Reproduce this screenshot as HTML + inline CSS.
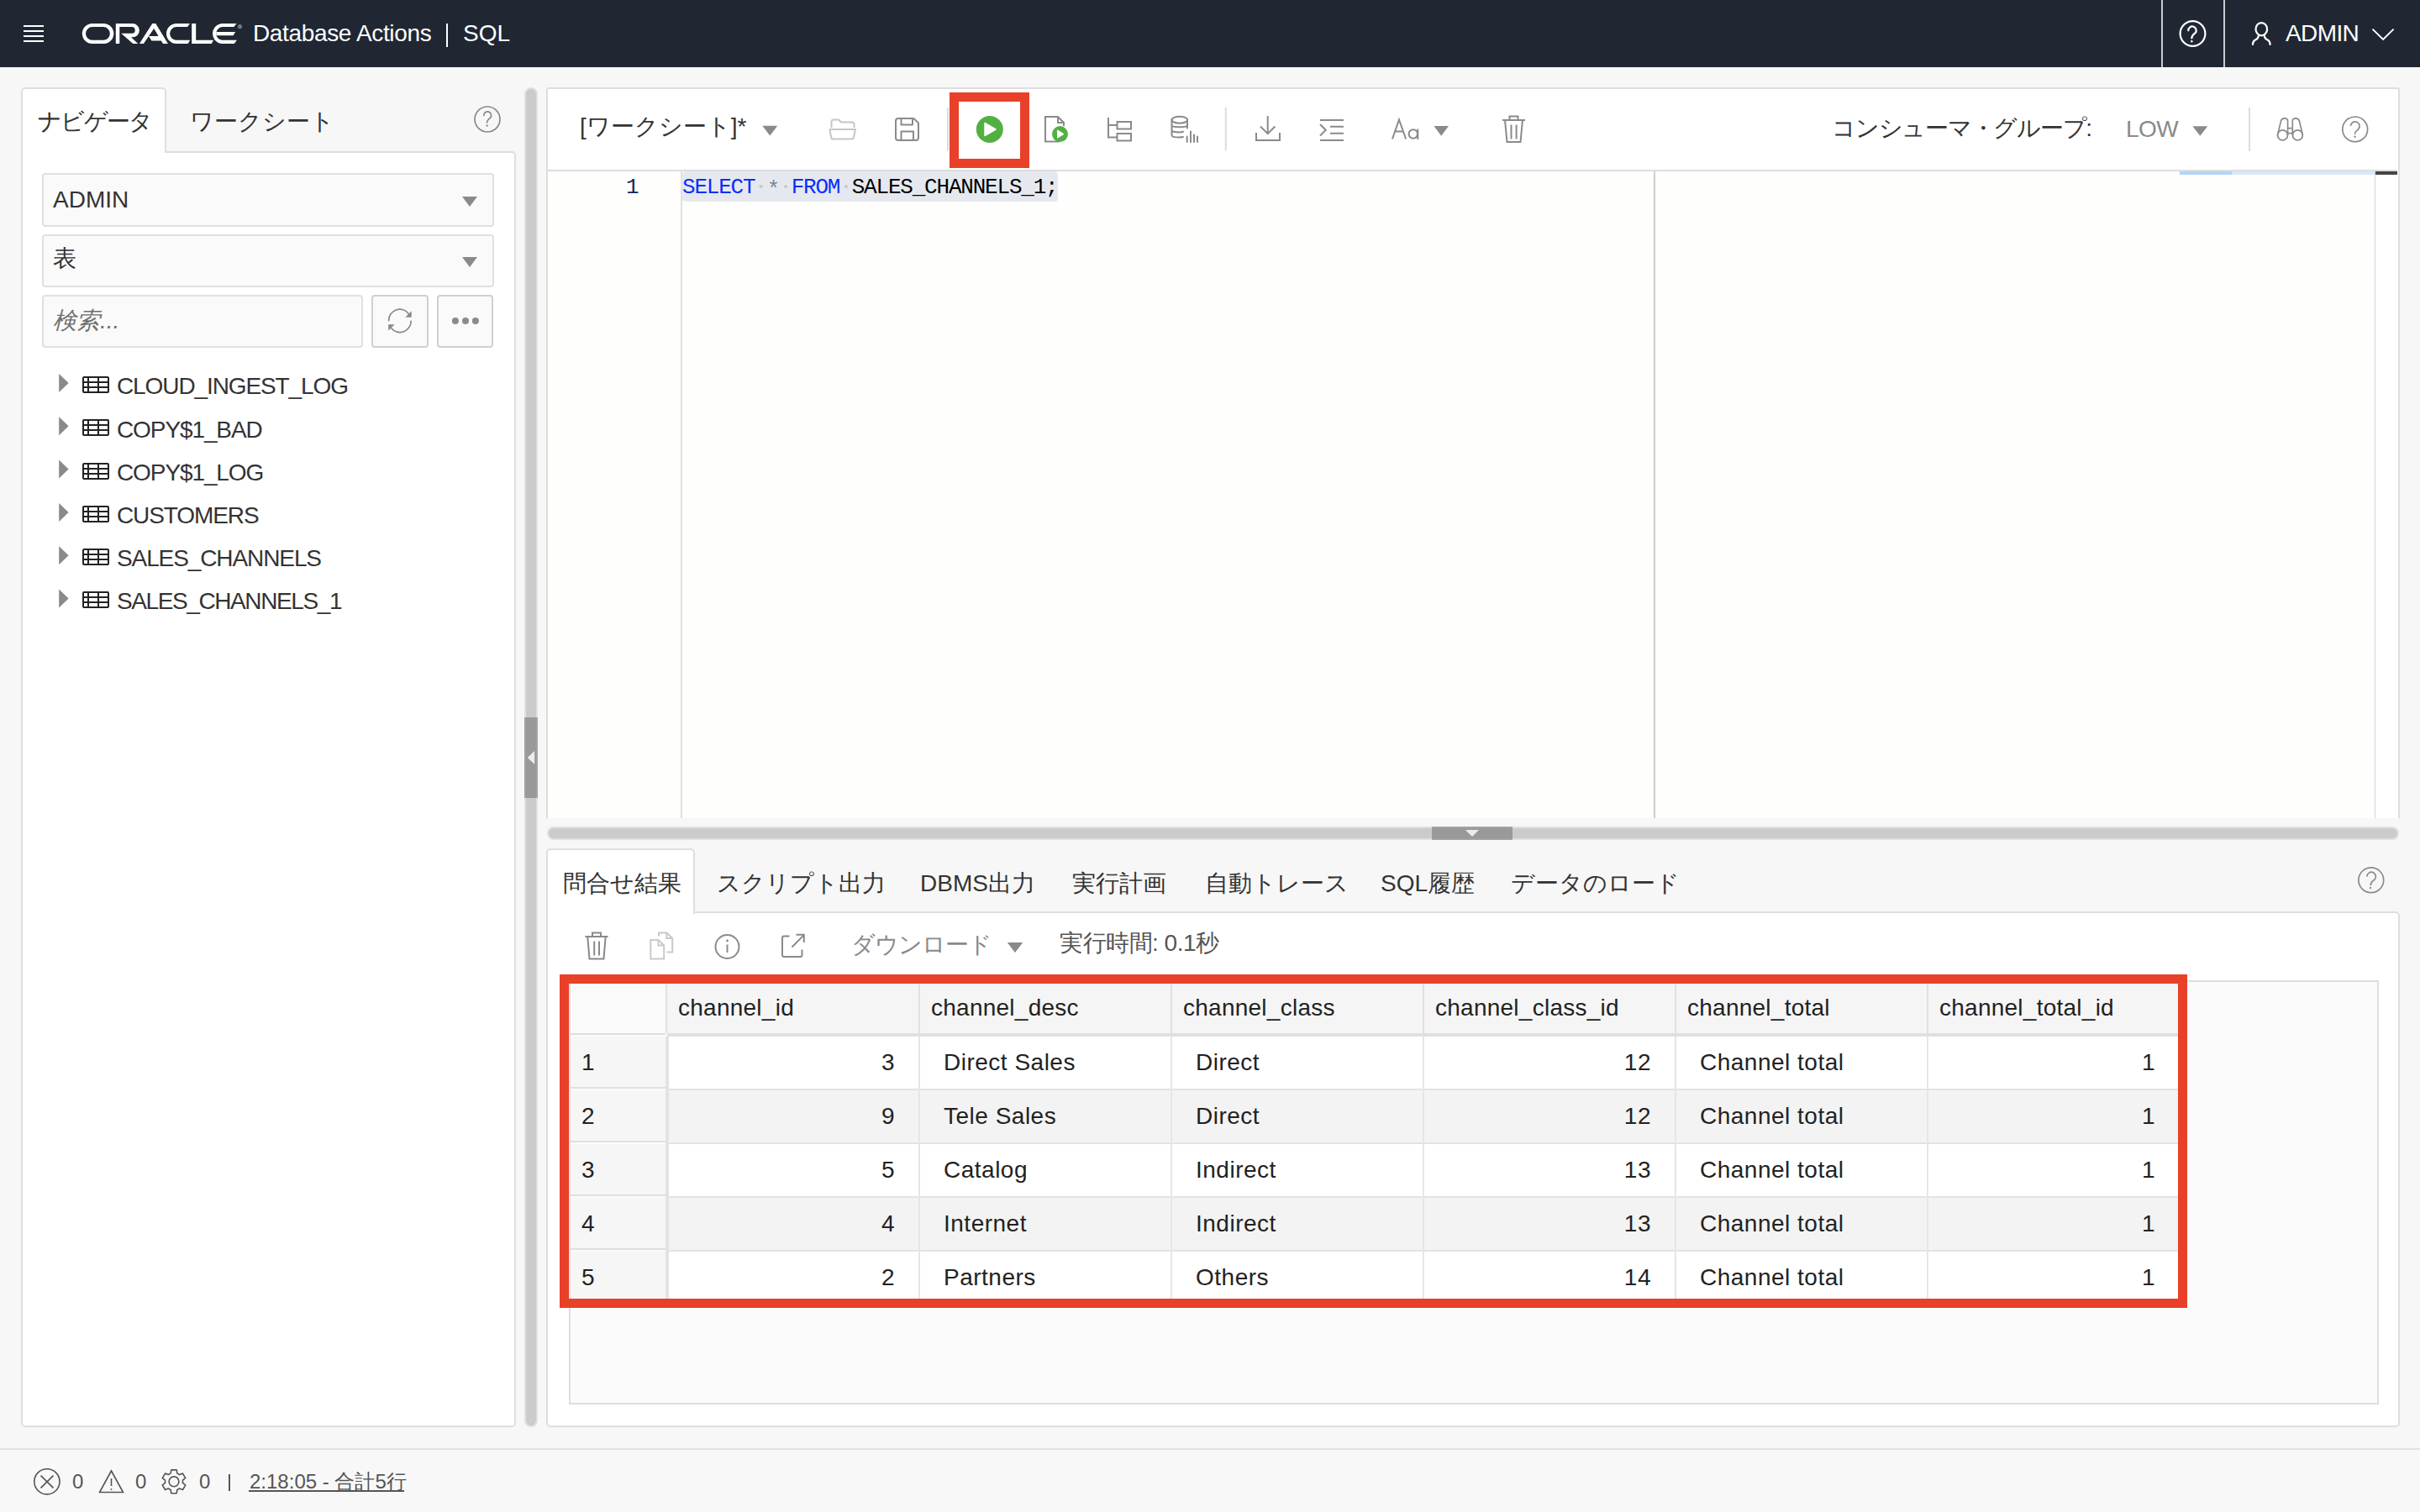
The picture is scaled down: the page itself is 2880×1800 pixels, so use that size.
<!DOCTYPE html>
<html><head><meta charset="utf-8">
<style>
*{box-sizing:border-box;margin:0;padding:0}
html,body{width:2880px;height:1800px;overflow:hidden;background:#f7f7f7;font-family:"Liberation Sans",sans-serif;color:#333}
.a{position:absolute}
.t{position:absolute;white-space:nowrap;font-size:28px;line-height:40px}
svg{position:absolute;overflow:visible}
#hdr{left:0;top:0;width:2880px;height:80px;background:#202733}
.hsep{top:0;width:2px;height:80px;background:#c9cbcf}
.panel{background:#fff;border:2px solid #dedede;border-radius:5px}
.tri{position:absolute;width:0;height:0;border-left:9px solid transparent;border-right:9px solid transparent;border-top:12px solid #8a8a8a}
.sel{background:#fafafa;border:2px solid #e0e0e0;border-radius:4px}
.tree .t{color:#333;letter-spacing:-1.1px}
.cell{color:#222}
.gi{stroke:#8a8a8a;fill:none;stroke-width:2.4}
</style></head><body>

<!-- HEADER -->
<div id="hdr" class="a"></div>
<div class="a" style="left:28px;top:30px;width:24px;height:2px;background:#fff"></div>
<div class="a" style="left:28px;top:36px;width:24px;height:2px;background:#fff"></div>
<div class="a" style="left:28px;top:42px;width:24px;height:2px;background:#fff"></div>
<div class="a" style="left:28px;top:48px;width:24px;height:2px;background:#fff"></div>

<div class="t" style="left:301px;top:20px;color:#fff;letter-spacing:-0.35px">Database Actions</div>
<div class="a" style="left:531px;top:28px;width:2px;height:28px;background:#fff"></div>
<div class="t" style="left:551px;top:20px;color:#fff">SQL</div>

<div class="a hsep" style="left:2572px"></div>
<div class="a hsep" style="left:2646px"></div>
<div class="t" style="left:2720px;top:20px;color:#fff;letter-spacing:-0.6px">ADMIN</div>

<!-- LEFT PANEL -->
<div class="a panel" style="left:25px;top:180px;width:589px;height:1519px;border-top-left-radius:0"></div>
<div class="a" style="left:25px;top:104px;width:173px;height:78px;background:#fff;border:2px solid #dedede;border-bottom:none;border-radius:5px 5px 0 0"></div>
<div class="t" style="left:45px;top:125px;letter-spacing:-1.7px">ナビゲータ</div>
<div class="t" style="left:226px;top:125px">ワークシート</div>

<div class="a sel" style="left:50px;top:206px;width:538px;height:64px"></div>
<div class="t" style="left:63px;top:218px">ADMIN</div>
<div class="tri" style="left:550px;top:234px"></div>
<div class="a sel" style="left:50px;top:279px;width:538px;height:63px"></div>
<div class="t" style="left:63px;top:288px">表</div>
<div class="tri" style="left:550px;top:306px"></div>
<div class="a sel" style="left:50px;top:351px;width:382px;height:63px"></div>
<div class="t" style="left:63px;top:362px;color:#707070;font-style:italic">検索...</div>
<div class="a sel" style="left:442px;top:351px;width:68px;height:63px;border-color:#d0d0d0"></div>
<div class="a sel" style="left:520px;top:351px;width:67px;height:63px;border-color:#d0d0d0"></div>

<div class="tree">
<div class="t" style="left:139px;top:440px">CLOUD_INGEST_LOG</div>
<div class="t" style="left:139px;top:492px">COPY$1_BAD</div>
<div class="t" style="left:139px;top:543px">COPY$1_LOG</div>
<div class="t" style="left:139px;top:594px">CUSTOMERS</div>
<div class="t" style="left:139px;top:645px">SALES_CHANNELS</div>
<div class="t" style="left:139px;top:696px;letter-spacing:-1.4px">SALES_CHANNELS_1</div>
</div>

<!-- vertical splitter -->
<div class="a" style="left:624px;top:104px;width:16px;height:1595px;background:#cbcbcb;border:2px solid #e0e0e0;border-radius:8px"></div>
<div class="a" style="left:624px;top:854px;width:16px;height:96px;background:#999;border-left:2px solid #a3a3a3;border-right:2px solid #a3a3a3"></div>

<!-- EDITOR PANEL -->
<div class="a panel" style="left:650px;top:104px;width:2206px;height:870px;border-radius:3px 3px 0 0;border-bottom:none"></div>
<div class="a" style="left:652px;top:202px;width:2201px;height:2px;background:#dedede"></div>
<div class="a" style="left:652px;top:204px;width:2201px;height:770px;background:#fefefc"></div>
<div class="a" style="left:810px;top:204px;width:2px;height:770px;background:#dfe1e1"></div>
<div class="a" style="left:1968px;top:204px;width:2px;height:770px;background:#cecece"></div>
<div class="a" style="left:2826px;top:204px;width:27px;height:770px;background:#fff"></div><div class="a" style="left:2826px;top:204px;width:1px;height:770px;background:#d4d4d4"></div>

<div class="t" style="left:690px;top:131px">[ワークシート]*</div>
<div class="t" style="left:2180px;top:133px;letter-spacing:-1.25px">コンシューマ・グループ:</div>
<div class="t" style="left:2530px;top:134px;color:#8a8a8a;letter-spacing:-0.6px">LOW</div>

<!-- code -->
<div class="a" style="left:812px;top:204px;width:447px;height:36px;background:#e5e9ef;border-radius:4px"></div>
<div class="t" style="left:745px;top:203px;font-family:'Liberation Mono',monospace;font-size:26px;color:#13275a">1</div>
<div class="t" style="left:812px;top:203px;font-family:'Liberation Mono',monospace;font-size:26px;letter-spacing:-1.2px;color:#000"><span style="color:#0a2cff">SELECT</span> <span style="color:#7b8494;position:relative;top:3px">*</span> <span style="color:#0a2cff">FROM</span> SALES_CHANNELS_1;</div>
<svg class="a" style="left:0;top:0" width="1100" height="260"><g fill="#c5c9ce"><circle cx="905.6" cy="222" r="2.1"/><circle cx="935.1" cy="222" r="2.1"/><circle cx="1007" cy="222" r="2.1"/></g></svg>

<!-- horizontal splitter -->
<div class="a" style="left:651px;top:984px;width:2204px;height:16px;background:#cbcbcb;border:2px solid #e0e0e0;border-radius:8px"></div>
<div class="a" style="left:1704px;top:984px;width:96px;height:16px;background:#999;border-top:2px solid #a3a3a3;border-bottom:2px solid #a3a3a3"></div>

<!-- RESULTS PANEL -->
<div class="a panel" style="left:650px;top:1085px;width:2206px;height:614px;border-top-left-radius:0"></div>
<div class="a" style="left:650px;top:1010px;width:177px;height:78px;background:#fff;border:2px solid #dedede;border-bottom:none;border-radius:5px 5px 0 0"></div>
<div class="t" style="left:670px;top:1032px">問合せ結果</div>
<div class="t" style="left:853px;top:1032px">スクリプト出力</div>
<div class="t" style="left:1095px;top:1032px">DBMS出力</div>
<div class="t" style="left:1276px;top:1032px">実行計画</div>
<div class="t" style="left:1434px;top:1032px">自動トレース</div>
<div class="t" style="left:1643px;top:1032px">SQL履歴</div>
<div class="t" style="left:1798px;top:1032px">データのロード</div>

<div class="t" style="left:1013px;top:1105px;color:#8a8a8a;letter-spacing:-1px">ダウンロード</div>
<div class="tri" style="left:1199px;top:1122px"></div>
<div class="t" style="left:1261px;top:1103px;color:#555;letter-spacing:-0.5px">実行時間: 0.1秒</div>

<!-- grid -->
<div class="a" style="left:677px;top:1167px;width:2154px;height:505px;background:#fbfbfb;border:2px solid #dedede"></div>

<!-- TABLE -->
<div class="a" style="left:679px;top:1169px;width:113px;height:61px;background:#fafafa"></div>
<div class="a" style="left:794px;top:1169px;width:1799px;height:61px;background:#f5f5f6"></div>
<div class="a" style="left:679px;top:1230px;width:113px;height:2px;background:#dedede"></div>
<div class="a" style="left:794px;top:1230px;width:1799px;height:4px;background:#dfe0df"></div>
<div class="a" style="left:792px;top:1169px;width:2px;height:61px;background:#e0e0e0"></div>
<div class="a" style="left:1093px;top:1169px;width:2px;height:61px;background:#e0e0e0"></div>
<div class="a" style="left:1393px;top:1169px;width:2px;height:61px;background:#e0e0e0"></div>
<div class="a" style="left:1693px;top:1169px;width:2px;height:61px;background:#e0e0e0"></div>
<div class="a" style="left:1993px;top:1169px;width:2px;height:61px;background:#e0e0e0"></div>
<div class="a" style="left:2293px;top:1169px;width:2px;height:61px;background:#e0e0e0"></div>
<div class="t cell" style="left:807px;top:1180px;letter-spacing:0.25px">channel_id</div>
<div class="t cell" style="left:1108px;top:1180px;letter-spacing:0.25px">channel_desc</div>
<div class="t cell" style="left:1408px;top:1180px;letter-spacing:0.25px">channel_class</div>
<div class="t cell" style="left:1708px;top:1180px;letter-spacing:0.25px">channel_class_id</div>
<div class="t cell" style="left:2008px;top:1180px;letter-spacing:0.25px">channel_total</div>
<div class="t cell" style="left:2308px;top:1180px;letter-spacing:0.25px">channel_total_id</div>
<div class="a" style="left:679px;top:1234px;width:113px;height:60px;background:#f6f6f7"></div>
<div class="a" style="left:679px;top:1294px;width:113px;height:2px;background:#e0e0e0"></div>
<div class="a" style="left:796px;top:1234px;width:1797px;height:62px;background:#ffffff"></div>
<div class="a" style="left:794px;top:1296px;width:1799px;height:2px;background:#e3e3e3"></div>
<div class="a" style="left:792px;top:1234px;width:4px;height:64px;background:#e3e3e3"></div>
<div class="a" style="left:1093px;top:1234px;width:2px;height:64px;background:#e6e6e6"></div>
<div class="a" style="left:1393px;top:1234px;width:2px;height:64px;background:#e6e6e6"></div>
<div class="a" style="left:1693px;top:1234px;width:2px;height:64px;background:#e6e6e6"></div>
<div class="a" style="left:1993px;top:1234px;width:2px;height:64px;background:#e6e6e6"></div>
<div class="a" style="left:2293px;top:1234px;width:2px;height:64px;background:#e6e6e6"></div>
<div class="t cell" style="left:692px;top:1245px;letter-spacing:0.5px">1</div>
<div class="t cell" style="left:792px;width:273px;text-align:right;top:1245px;letter-spacing:0.5px">3</div>
<div class="t cell" style="left:1123px;top:1245px;letter-spacing:0.5px">Direct Sales</div>
<div class="t cell" style="left:1423px;top:1245px;letter-spacing:0.5px">Direct</div>
<div class="t cell" style="left:1693px;width:272px;text-align:right;top:1245px;letter-spacing:0.5px">12</div>
<div class="t cell" style="left:2023px;top:1245px;letter-spacing:0.5px">Channel total</div>
<div class="t cell" style="left:2293px;width:272px;text-align:right;top:1245px;letter-spacing:0.5px">1</div>
<div class="a" style="left:679px;top:1298px;width:113px;height:60px;background:#f6f6f7"></div>
<div class="a" style="left:679px;top:1358px;width:113px;height:2px;background:#e0e0e0"></div>
<div class="a" style="left:796px;top:1298px;width:1797px;height:62px;background:#f3f3f3"></div>
<div class="a" style="left:794px;top:1360px;width:1799px;height:2px;background:#e3e3e3"></div>
<div class="a" style="left:792px;top:1298px;width:4px;height:64px;background:#e3e3e3"></div>
<div class="a" style="left:1093px;top:1298px;width:2px;height:64px;background:#e6e6e6"></div>
<div class="a" style="left:1393px;top:1298px;width:2px;height:64px;background:#e6e6e6"></div>
<div class="a" style="left:1693px;top:1298px;width:2px;height:64px;background:#e6e6e6"></div>
<div class="a" style="left:1993px;top:1298px;width:2px;height:64px;background:#e6e6e6"></div>
<div class="a" style="left:2293px;top:1298px;width:2px;height:64px;background:#e6e6e6"></div>
<div class="t cell" style="left:692px;top:1309px;letter-spacing:0.5px">2</div>
<div class="t cell" style="left:792px;width:273px;text-align:right;top:1309px;letter-spacing:0.5px">9</div>
<div class="t cell" style="left:1123px;top:1309px;letter-spacing:0.5px">Tele Sales</div>
<div class="t cell" style="left:1423px;top:1309px;letter-spacing:0.5px">Direct</div>
<div class="t cell" style="left:1693px;width:272px;text-align:right;top:1309px;letter-spacing:0.5px">12</div>
<div class="t cell" style="left:2023px;top:1309px;letter-spacing:0.5px">Channel total</div>
<div class="t cell" style="left:2293px;width:272px;text-align:right;top:1309px;letter-spacing:0.5px">1</div>
<div class="a" style="left:679px;top:1362px;width:113px;height:60px;background:#f6f6f7"></div>
<div class="a" style="left:679px;top:1422px;width:113px;height:2px;background:#e0e0e0"></div>
<div class="a" style="left:796px;top:1362px;width:1797px;height:62px;background:#ffffff"></div>
<div class="a" style="left:794px;top:1424px;width:1799px;height:2px;background:#e3e3e3"></div>
<div class="a" style="left:792px;top:1362px;width:4px;height:64px;background:#e3e3e3"></div>
<div class="a" style="left:1093px;top:1362px;width:2px;height:64px;background:#e6e6e6"></div>
<div class="a" style="left:1393px;top:1362px;width:2px;height:64px;background:#e6e6e6"></div>
<div class="a" style="left:1693px;top:1362px;width:2px;height:64px;background:#e6e6e6"></div>
<div class="a" style="left:1993px;top:1362px;width:2px;height:64px;background:#e6e6e6"></div>
<div class="a" style="left:2293px;top:1362px;width:2px;height:64px;background:#e6e6e6"></div>
<div class="t cell" style="left:692px;top:1373px;letter-spacing:0.5px">3</div>
<div class="t cell" style="left:792px;width:273px;text-align:right;top:1373px;letter-spacing:0.5px">5</div>
<div class="t cell" style="left:1123px;top:1373px;letter-spacing:0.5px">Catalog</div>
<div class="t cell" style="left:1423px;top:1373px;letter-spacing:0.5px">Indirect</div>
<div class="t cell" style="left:1693px;width:272px;text-align:right;top:1373px;letter-spacing:0.5px">13</div>
<div class="t cell" style="left:2023px;top:1373px;letter-spacing:0.5px">Channel total</div>
<div class="t cell" style="left:2293px;width:272px;text-align:right;top:1373px;letter-spacing:0.5px">1</div>
<div class="a" style="left:679px;top:1426px;width:113px;height:60px;background:#f6f6f7"></div>
<div class="a" style="left:679px;top:1486px;width:113px;height:2px;background:#e0e0e0"></div>
<div class="a" style="left:796px;top:1426px;width:1797px;height:62px;background:#f3f3f3"></div>
<div class="a" style="left:794px;top:1488px;width:1799px;height:2px;background:#e3e3e3"></div>
<div class="a" style="left:792px;top:1426px;width:4px;height:64px;background:#e3e3e3"></div>
<div class="a" style="left:1093px;top:1426px;width:2px;height:64px;background:#e6e6e6"></div>
<div class="a" style="left:1393px;top:1426px;width:2px;height:64px;background:#e6e6e6"></div>
<div class="a" style="left:1693px;top:1426px;width:2px;height:64px;background:#e6e6e6"></div>
<div class="a" style="left:1993px;top:1426px;width:2px;height:64px;background:#e6e6e6"></div>
<div class="a" style="left:2293px;top:1426px;width:2px;height:64px;background:#e6e6e6"></div>
<div class="t cell" style="left:692px;top:1437px;letter-spacing:0.5px">4</div>
<div class="t cell" style="left:792px;width:273px;text-align:right;top:1437px;letter-spacing:0.5px">4</div>
<div class="t cell" style="left:1123px;top:1437px;letter-spacing:0.5px">Internet</div>
<div class="t cell" style="left:1423px;top:1437px;letter-spacing:0.5px">Indirect</div>
<div class="t cell" style="left:1693px;width:272px;text-align:right;top:1437px;letter-spacing:0.5px">13</div>
<div class="t cell" style="left:2023px;top:1437px;letter-spacing:0.5px">Channel total</div>
<div class="t cell" style="left:2293px;width:272px;text-align:right;top:1437px;letter-spacing:0.5px">1</div>
<div class="a" style="left:679px;top:1490px;width:113px;height:60px;background:#f6f6f7"></div>
<div class="a" style="left:679px;top:1550px;width:113px;height:2px;background:#e0e0e0"></div>
<div class="a" style="left:796px;top:1490px;width:1797px;height:62px;background:#ffffff"></div>
<div class="a" style="left:794px;top:1552px;width:1799px;height:2px;background:#e3e3e3"></div>
<div class="a" style="left:792px;top:1490px;width:4px;height:64px;background:#e3e3e3"></div>
<div class="a" style="left:1093px;top:1490px;width:2px;height:64px;background:#e6e6e6"></div>
<div class="a" style="left:1393px;top:1490px;width:2px;height:64px;background:#e6e6e6"></div>
<div class="a" style="left:1693px;top:1490px;width:2px;height:64px;background:#e6e6e6"></div>
<div class="a" style="left:1993px;top:1490px;width:2px;height:64px;background:#e6e6e6"></div>
<div class="a" style="left:2293px;top:1490px;width:2px;height:64px;background:#e6e6e6"></div>
<div class="t cell" style="left:692px;top:1501px;letter-spacing:0.5px">5</div>
<div class="t cell" style="left:792px;width:273px;text-align:right;top:1501px;letter-spacing:0.5px">2</div>
<div class="t cell" style="left:1123px;top:1501px;letter-spacing:0.5px">Partners</div>
<div class="t cell" style="left:1423px;top:1501px;letter-spacing:0.5px">Others</div>
<div class="t cell" style="left:1693px;width:272px;text-align:right;top:1501px;letter-spacing:0.5px">14</div>
<div class="t cell" style="left:2023px;top:1501px;letter-spacing:0.5px">Channel total</div>
<div class="t cell" style="left:2293px;width:272px;text-align:right;top:1501px;letter-spacing:0.5px">1</div>
<div class="a" style="left:666px;top:1160px;width:1937px;height:397px;border:11px solid #e9402a"></div>
<div class="a" style="left:1130px;top:110px;width:95px;height:90px;border:11px solid #e9402a"></div>

<!-- STATUS BAR -->
<div class="a" style="left:0;top:1726px;width:2880px;height:74px;background:#f8f8f8"></div><div class="a" style="left:0;top:1724px;width:2880px;height:2px;background:#e2e2e2"></div>
<div class="t" style="left:86px;top:1744px;color:#555;font-size:24px">0</div>
<div class="t" style="left:161px;top:1744px;color:#555;font-size:24px">0</div>
<div class="t" style="left:237px;top:1744px;color:#555;font-size:24px">0</div>
<div class="a" style="left:272px;top:1755px;width:2px;height:20px;background:#555"></div>
<div class="t" style="left:297px;top:1744px;color:#555;font-size:24px">2:18:05 - 合計5行</div>
<div class="a" style="left:296px;top:1774px;width:185px;height:2px;background:#555"></div>

<svg class="a" style="left:0;top:0" width="2880" height="1800" viewBox="0 0 2880 1800">
<!-- Oracle logo -->
<g fill="#fff">
<path fill-rule="evenodd" d="M109.8,28 H123.3 A12,12 0 0 1 123.3,52 H109.8 A12,12 0 0 1 109.8,28 Z M109.85,32.1 H123 A7.85,7.85 0 0 1 123,47.8 H109.85 A7.85,7.85 0 0 1 109.85,32.1 Z"/>
<path d="M137.8,52 V28 H157.75 A8.15,8.15 0 0 1 157.75,44.3 H156 L164.2,52 H158.3 L144.2,39.8 H156.85 A3.85,3.85 0 0 0 156.85,32.1 H142.3 V52 Z"/>
<path d="M165.9,52 L181.3,28 H185.3 L199.9,52 H194 L191.84,48.4 H180.4 L177,43 H188.6 L183.2,34 L170.9,52 Z"/>
<path d="M226,28 H210 A12,12 0 0 0 210,52 H223.7 L226.2,47.8 H210 A7.85,7.85 0 0 1 210,32.1 H223 Z"/>
<path d="M228.2,28 H233.2 V47.8 H254 L251.8,52 H228.2 Z"/>
<path d="M281.5,28 H265 A12,12 0 0 0 265,52 H278.8 L281.9,47.8 H265 A7.85,7.85 0 0 1 265,32.1 H278.4 Z"/>
<path d="M257.3,37.9 H280.1 L277.6,42.2 H257.3 Z"/>
</g>
<circle cx="285.5" cy="31.7" r="2.4" fill="#9a9ca0"/><circle cx="285.5" cy="31.7" r="1.3" fill="#5a5e66"/>
<!-- header help -->
<g fill="none" stroke="#fff" stroke-width="2.2" stroke-linecap="round">
<circle cx="2609.5" cy="40" r="14.9"/>
<path d="M2604.3,36.3 A4.7,4.7 0 1 1 2612.6,39.2 C2610.2,41.2 2608.3,42.3 2608.3,45.4"/>
<ellipse cx="2691.3" cy="34.7" rx="6.8" ry="7.6"/><path d="M2687.8,42.6 Q2687.5,46 2684,47.5 Q2681,49 2681,53 M2694.8,42.6 Q2695.1,46 2698.6,47.5 Q2701.6,49 2701.6,53"/>
<path d="M2823.5,34.6 L2836.1,47 L2848.6,34.6" stroke-width="1.9" stroke-linecap="butt"/>
</g>
<circle cx="2608.3" cy="49.2" r="1.3" fill="#fff"/>

<!-- left help -->
<g fill="none" stroke="#8a8a8a" stroke-width="1.7" stroke-linecap="round">
<circle cx="580" cy="142" r="15"/>
<path d="M575.8,137.5 A4.4,4.4 0 1 1 583.4,140.3 C581.2,142 579.6,143.2 579.6,146"/>
</g>
<circle cx="579.6" cy="149.6" r="1.2" fill="#8a8a8a"/>

<!-- refresh -->
<g fill="none" stroke="#8a8a8a" stroke-width="1.7">
<path d="M462.6,382.3 A13.2,13.2 0 0 1 486.5,373.7"/>
<path d="M489.1,381.6 A13.2,13.2 0 0 1 465.5,390.5"/>
</g>
<path d="M489.7,370.2 V377.7 H482.3 Z M462.2,386.2 H469.7 L462.2,393.7 Z" fill="#8a8a8a"/>
<g fill="#8a8a8a"><circle cx="541.9" cy="381.9" r="4"/><circle cx="554" cy="381.9" r="4"/><circle cx="565.9" cy="381.9" r="4"/></g>

<!-- tree triangles + table icons -->
<path d="M70.2,445.0 L81.6,456.0 L70.2,467.0 Z" fill="#8a8a8a"/>
<g fill="none" stroke="#222" stroke-width="2"><rect x="99" y="449" width="30" height="18" rx="1"/><path d="M105,449 V467 M117,449 V467 M99,455 H129 M99,461 H129"/></g>
<path d="M70.2,496.3 L81.6,507.3 L70.2,518.3 Z" fill="#8a8a8a"/>
<g fill="none" stroke="#222" stroke-width="2"><rect x="99" y="500" width="30" height="18" rx="1"/><path d="M105,500 V518 M117,500 V518 M99,506 H129 M99,512 H129"/></g>
<path d="M70.2,547.6 L81.6,558.6 L70.2,569.6 Z" fill="#8a8a8a"/>
<g fill="none" stroke="#222" stroke-width="2"><rect x="99" y="552" width="30" height="18" rx="1"/><path d="M105,552 V570 M117,552 V570 M99,558 H129 M99,564 H129"/></g>
<path d="M70.2,598.9 L81.6,609.9 L70.2,620.9 Z" fill="#8a8a8a"/>
<g fill="none" stroke="#222" stroke-width="2"><rect x="99" y="603" width="30" height="18" rx="1"/><path d="M105,603 V621 M117,603 V621 M99,609 H129 M99,615 H129"/></g>
<path d="M70.2,650.2 L81.6,661.2 L70.2,672.2 Z" fill="#8a8a8a"/>
<g fill="none" stroke="#222" stroke-width="2"><rect x="99" y="654" width="30" height="18" rx="1"/><path d="M105,654 V672 M117,654 V672 M99,660 H129 M99,666 H129"/></g>
<path d="M70.2,701.5 L81.6,712.5 L70.2,723.5 Z" fill="#8a8a8a"/>
<g fill="none" stroke="#222" stroke-width="2"><rect x="99" y="705" width="30" height="18" rx="1"/><path d="M105,705 V723 M117,705 V723 M99,711 H129 M99,717 H129"/></g>

<!-- splitter arrows -->
<path d="M627.8,901.9 L636.1,894 V909.8 Z" fill="#ececec"/>
<path d="M1743.9,988 H1760 L1752,996 Z" fill="#ececec"/>

<!-- editor toolbar -->
<path d="M907.3,149.8 H925.3 L916.3,161.6 Z" fill="#8a8a8a"/>
<g fill="none" stroke="#c6c6c6" stroke-width="2" stroke-linejoin="round">
<path d="M989.5,152 V145 Q989.5,142.5 992,142.5 H998 L1001,145.5 H1014 Q1016.5,145.5 1016.5,148 V152"/>
<path d="M987.5,154 H1018 L1016,163.5 Q1015.5,165.5 1013.5,165.5 H991.5 Q989.5,165.5 989.2,163.5 Z"/>
</g>
<g fill="none" stroke="#8a8a8a" stroke-width="2" stroke-linejoin="round">
<path d="M1069,141 H1087.5 L1093,146.5 V164 Q1093,167 1090,167 H1069 Q1066,167 1066,164 V144 Q1066,141 1069,141 Z"/>
<path d="M1072.5,141 V148.5 H1086 V141 M1072.5,167 V156.5 H1087 V167"/>
</g>
<rect x="1127" y="128" width="2" height="51.5" fill="#dcdcdc"/>
<circle cx="1177.8" cy="154" r="16" fill="#52b043"/>
<path d="M1172,146.5 V161.5 L1185,154 Z" fill="#fff" stroke="#fff" stroke-width="1.5" stroke-linejoin="round"/>
<g fill="none" stroke="#8a8a8a" stroke-width="2">
<path d="M1261,168.6 H1244 V139 H1259 L1266,146 V150"/>
<path d="M1259,139 V146 H1266"/>
</g>
<circle cx="1261.5" cy="159.6" r="9.5" fill="#52b043"/>
<path d="M1258.5,155 V164.2 L1266,159.6 Z" fill="#fff" stroke="#fff" stroke-width="1" stroke-linejoin="round"/>
<g fill="none" stroke="#8a8a8a" stroke-width="2">
<path d="M1319,140 V163.5 H1329 M1319,149 H1329"/>
<rect x="1329.5" y="145" width="16.5" height="8.5"/>
<rect x="1329.5" y="159" width="16.5" height="8.5"/>
</g>
<g fill="none" stroke="#8a8a8a" stroke-width="2" stroke-linecap="round">
<ellipse cx="1403.8" cy="142.7" rx="9.3" ry="4"/>
<path d="M1394.5,142.7 V161 Q1394.5,163.5 1403.5,163.5 Q1406,163.5 1408,163 M1394.5,149 Q1394.5,151.2 1403.8,151.2 Q1413,151.2 1413,149 V152.5 M1394.5,155 Q1395,157.4 1403.8,157.4 Q1406,157.4 1408,156.8 M1413,142.7 V152"/>
<path d="M1412.7,162.5 V169 M1417,156.5 V169 M1421,160.5 V169 M1425,162.5 V169"/>
</g>
<rect x="1457.8" y="128" width="2" height="51.5" fill="#dcdcdc"/>
<g fill="none" stroke="#8a8a8a" stroke-width="2">
<path d="M1508.7,138 V159 M1500,150.5 L1508.7,159.2 L1517.4,150.5"/>
<path d="M1495,158 V167 H1523 V158"/>
<path d="M1571,143 H1599 M1583,150.8 H1599 M1583,158.7 H1599 M1571,167 H1599 M1571,148 L1577.8,154.8 L1571,161.6"/>
<path d="M1657,165.5 L1665,142.5 L1673.2,165.5 M1660.2,156.5 H1670"/>
<circle cx="1681.8" cy="159.5" r="5.2"/>
<path d="M1687.3,153.5 V166"/>
</g>
<path d="M1706.5,150 H1724 L1715.2,161.7 Z" fill="#8a8a8a"/>
<g fill="none" stroke="#8a8a8a" stroke-width="2">
<path d="M1788,143 H1815 M1796.5,143 V138.5 H1806.5 V143 M1791,143 L1793.5,169 H1809.5 L1812,143 M1798.5,148.5 V165.5 M1804.6,148.5 V165.5"/>
</g>
<path d="M2609.4,150.2 H2627.3 L2618.3,161.7 Z" fill="#8a8a8a"/>
<rect x="2676" y="128" width="2" height="52" fill="#dcdcdc"/>
<g fill="none" stroke="#8a8a8a" stroke-width="1.7">
<circle cx="2716.5" cy="160.9" r="6"/>
<circle cx="2734.4" cy="160.9" r="6"/>
<path d="M2710.5,160.9 L2714.5,144 Q2715.5,140.9 2718.8,140.9 Q2722.6,140.9 2722.6,144 V161"/>
<path d="M2740.4,160.9 L2736.4,144 Q2735.4,140.9 2732.1,140.9 Q2728.3,140.9 2728.3,144 V161"/>
<path d="M2722.6,152.7 H2728.3 M2722.6,158.6 H2728.3"/>
<circle cx="2802.7" cy="153.9" r="14.9"/>
<path d="M2797.5,150 A5.3,5.3 0 1 1 2806.6,153.8 C2804.5,155.6 2802.5,156.5 2802.5,160"/>
</g>
<circle cx="2802.5" cy="162.8" r="1.2" fill="#8a8a8a"/>

<!-- editor blue bars -->
<rect x="2594" y="204" width="232" height="4" fill="#d8e8fb"/>
<rect x="2594" y="204" width="62" height="4" fill="#b3d4fa"/>
<rect x="2827" y="204" width="26" height="4" fill="#444"/>

<!-- results help -->
<g fill="none" stroke="#8a8a8a" stroke-width="1.7">
<circle cx="2821.8" cy="1047.8" r="14.9"/>
<path d="M2817,1043.5 A5.2,5.2 0 1 1 2826,1047 C2823.5,1049 2821.2,1050 2821.2,1054"/>
</g>
<circle cx="2821" cy="1057" r="1.2" fill="#8a8a8a"/>

<!-- results toolbar -->
<g fill="none" stroke="#8a8a8a" stroke-width="2">
<path d="M696.5,1115 H723.5 M705,1115 V1110.5 H715 V1115 M699.3,1115 L701.5,1141.5 H718.5 L720.7,1115 M707.2,1120.5 V1137.5 M713,1120.5 V1137.5"/>
</g>
<g fill="none" stroke="#c9c9c9" stroke-width="2">
<path d="M784,1114.5 V1110.5 H793.5 L800.2,1117 V1133.5 H793.5"/>
<path d="M793.5,1110.5 V1117 H800.2"/>
<path d="M774.3,1141.5 V1119 H783.5 L790.2,1125.5 V1141.5 Z"/>
<path d="M783.5,1119 V1125.5 H790.2"/>
</g>
<g fill="none" stroke="#8a8a8a" stroke-width="2">
<circle cx="865.5" cy="1127" r="14"/>
<path d="M865.5,1124.5 V1134"/>
<path d="M939.5,1114.5 H933 Q931,1114.5 931,1116.5 V1137 Q931,1139 933,1139 H952.5 Q954.5,1139 954.5,1137 V1130.5"/>
<path d="M942.5,1127.5 L956.2,1113.6 M947.5,1112.8 H956.8 V1122"/>
</g>
<circle cx="865.5" cy="1120" r="1.4" fill="#8a8a8a"/>
<path d="M1199,1122 H1217 L1208,1133.6 Z" fill="#8a8a8a"/>

<!-- status bar icons -->
<g fill="none" stroke="#555" stroke-width="1.6">
<circle cx="55.9" cy="1763.8" r="15.1"/>
<path d="M48.5,1756.6 L63.5,1771.4 M63.5,1756.6 L48.5,1771.4"/>
<path d="M132.5,1751 L118.5,1776.5 H146.5 Z" stroke-linejoin="miter"/>
<path d="M132.5,1760 V1769"/>
<circle cx="207" cy="1763.8" r="5.9"/>
<path d="M203.20,1753.90 L203.78,1749.87 L210.22,1749.87 L210.80,1753.90 L213.67,1755.56 L217.46,1754.05 L220.68,1759.62 L217.47,1762.14 L217.47,1765.46 L220.68,1767.98 L217.46,1773.55 L213.67,1772.04 L210.80,1773.70 L210.22,1777.73 L203.78,1777.73 L203.20,1773.70 L200.33,1772.04 L196.54,1773.55 L193.32,1767.98 L196.53,1765.46 L196.53,1762.14 L193.32,1759.62 L196.54,1754.05 L200.33,1755.56 Z" stroke-linejoin="round"/>
</g>
<circle cx="132.5" cy="1773" r="0.9" fill="#555"/>
</svg>

</body></html>
